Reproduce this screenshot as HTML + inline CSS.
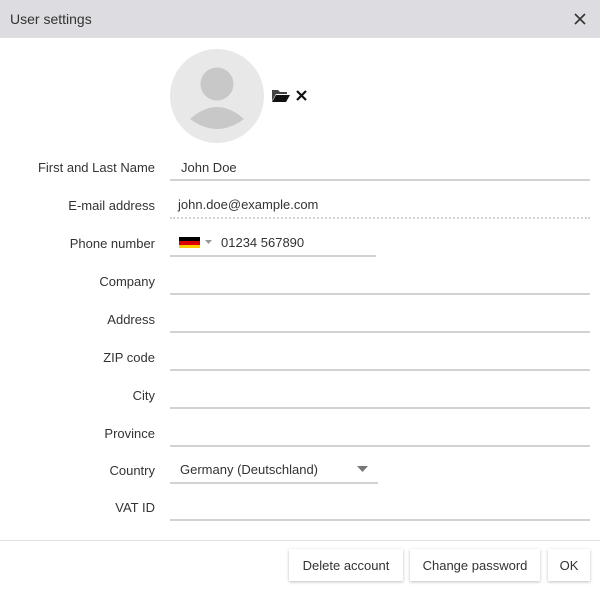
<!DOCTYPE html>
<html><head><style>
*{margin:0;padding:0;box-sizing:border-box}
body{width:600px;height:589px;background:#fff;font-family:"Liberation Sans",Arial,sans-serif;font-size:13px;color:#333;position:relative;overflow:hidden}
.hdr{position:absolute;left:0;top:0;width:600px;height:38px;background:#dcdce1}
.hdr .t{position:absolute;left:10px;top:11px;font-size:14px;color:#333}
.abs{position:absolute}
.lbl{position:absolute;right:445px;font-size:13px;color:#333;text-align:right;white-space:nowrap}
.ln{position:absolute;height:2px;background:#d2d2d2}
.val{position:absolute;font-size:13px;color:#333}
.btn{position:absolute;top:549px;height:32px;background:#fff;box-shadow:0 1px 3px rgba(0,0,0,.25);font-size:13px;color:#333;text-align:center;line-height:34px}
</style></head><body>
<div class="hdr"><div class="t">User settings</div>
<svg class="abs" style="left:574px;top:13px" width="12" height="12"><path d="M1 1L11 11M11 1L1 11" stroke="#333" stroke-width="1.6"/></svg></div>
<svg class="abs" style="left:170px;top:49px" width="94" height="94"><circle cx="47" cy="47" r="47" fill="#e8e8e8"/><circle cx="47" cy="35" r="16.5" fill="#c8c8c8"/><path d="M20 70Q47 46 74 70Q47 90 20 70Z" fill="#c8c8c8"/></svg>
<svg class="abs" style="left:272px;top:89px" width="18" height="13"><path d="M0 1h6l2 2h7v2H4L0 12Z" fill="#444"/><path d="M4 6h14l-4 7H0Z" fill="#111"/></svg>
<svg class="abs" style="left:296px;top:90px" width="11" height="11"><path d="M1 1L10 10M10 1L1 10" stroke="#111" stroke-width="2.2"/></svg>

<div class="lbl" style="top:160px">First and Last Name</div>
<div class="val" style="left:181px;top:160px">John Doe</div>
<div class="ln" style="left:170px;top:179px;width:420px"></div>

<div class="lbl" style="top:198px">E-mail address</div>
<div class="val" style="left:178px;top:197px">john.doe@example.com</div>
<div class="abs" style="left:170px;top:217px;width:420px;border-top:2px dotted #d2d2d2"></div>

<div class="lbl" style="top:236px">Phone number</div>
<div class="abs" style="left:179px;top:237px;width:21px;height:4px;background:#000"></div>
<div class="abs" style="left:179px;top:241px;width:21px;height:4px;background:#d00"></div>
<div class="abs" style="left:179px;top:245px;width:21px;height:3px;background:#fc0"></div>
<svg class="abs" style="left:205px;top:240px" width="7" height="4"><path d="M0 0h7L3.5 4Z" fill="#999"/></svg>
<div class="val" style="left:221px;top:235px">01234 567890</div>
<div class="ln" style="left:170px;top:255px;width:206px"></div>

<div class="lbl" style="top:274px">Company</div>
<div class="ln" style="left:170px;top:293px;width:420px"></div>
<div class="lbl" style="top:312px">Address</div>
<div class="ln" style="left:170px;top:331px;width:420px"></div>
<div class="lbl" style="top:350px">ZIP code</div>
<div class="ln" style="left:170px;top:369px;width:420px"></div>
<div class="lbl" style="top:388px">City</div>
<div class="ln" style="left:170px;top:407px;width:420px"></div>
<div class="lbl" style="top:426px">Province</div>
<div class="ln" style="left:170px;top:445px;width:420px"></div>

<div class="lbl" style="top:463px">Country</div>
<div class="val" style="left:180px;top:462px">Germany (Deutschland)</div>
<svg class="abs" style="left:357px;top:466px" width="11" height="6"><path d="M0 0h11L5.5 6Z" fill="#777"/></svg>
<div class="ln" style="left:170px;top:482px;width:208px"></div>

<div class="lbl" style="top:500px">VAT ID</div>
<div class="ln" style="left:170px;top:519px;width:420px"></div>

<div class="abs" style="left:0;top:540px;width:600px;height:1px;background:#e0e0e0"></div>
<div class="btn" style="left:289px;width:114px">Delete account</div>
<div class="btn" style="left:410px;width:130px">Change password</div>
<div class="btn" style="left:548px;width:42px">OK</div>
</body></html>
